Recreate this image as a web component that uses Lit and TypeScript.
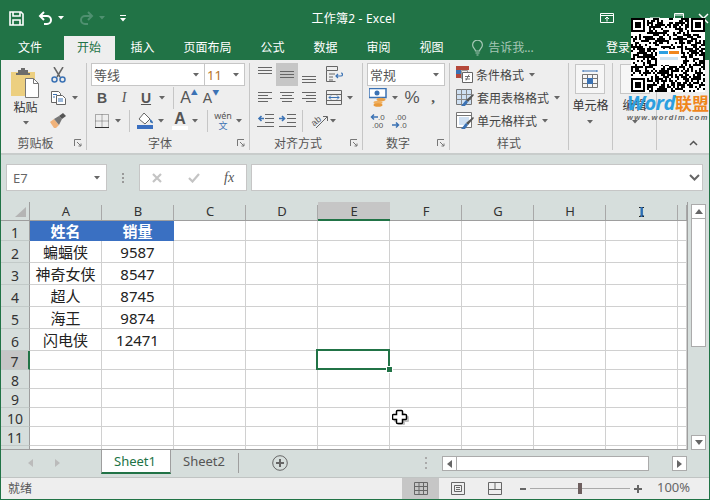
import { LitElement, html, svg, css } from "lit";
import { customElement } from "lit/decorators.js";

const caret = (c = "#666") => html`<svg class="caret" width="6" height="4" viewBox="0 0 6 4"><path d="M0 0h6L3 3.5z" fill="${c}"/></svg>`;

// --- title bar
const icSave = html`<svg width="15" height="15" viewBox="0 0 15 15" fill="none" stroke="#fff" stroke-width="1.6"><path d="M1 1h11l2 2v11H1z"/><path d="M4 1v4h7V1M4 14V9h7v5"/></svg>`;
const icUndo = html`<svg class="undo" width="15" height="14" viewBox="0 0 15 14" fill="none" stroke="#fff" stroke-width="2"><path d="M6 1L2 5l4 4M2 5h7a4 4 0 0 1 0 8H6"/></svg>`;
const icRedo = html`<svg width="15" height="14" viewBox="0 0 15 14" fill="none" stroke="#4f9070" stroke-width="2"><path d="M9 1l4 4-4 4M13 5H6a4 4 0 0 0 0 8h3"/></svg>`;
const icCustom = html`<svg width="6" height="7" viewBox="0 0 6 7"><path d="M0 0h6v1H0zM0 3h6L3 6.5z" fill="#fff"/></svg>`;
const icDisplay = html`<svg width="14" height="10" viewBox="0 0 14 10" fill="none" stroke="#fff"><path d="M.5.5h13v9H.5zM.5 2.5h13M7 8.5V4.500M5 6l2-2 2 2"/></svg>`;
const icMin = html`<svg width="10" height="2"><path d="M0 1h10" stroke="#fff"/></svg>`;
const icMax = html`<svg width="10" height="10" viewBox="0 0 10 10" fill="none" stroke="#fff"><path d="M.5.5h9v9H.5zM.5 2h9"/></svg>`;
const icClose = html`<svg width="11" height="11" viewBox="0 0 11 11" stroke="#fff" stroke-width="1.5"><path d="M1 1l9 9M10 1l-9 9"/></svg>`;
const icBulb = html`<svg width="11" height="16" viewBox="0 0 11 16" fill="none" stroke="#a5c7b5" stroke-width="1.200"><path d="M3.500 11c0-2-2.900-3-2.900-6a4.900 4.900 0 0 1 9.800 0c0 3-2.900 4-2.900 6zM3.500 13h4M4.500 15h2"/></svg>`;

// --- clipboard
const icPaste = html`<svg width="29" height="31" viewBox="0 0 29 31"><path d="M0 5h24v24H0z" fill="#eccf80"/><path d="M7 3h3V1h4v2h3v3h2v2H5V6h2z" fill="#6c6c6c"/><path d="M14.500 11.500h8l5 5v14h-13z" fill="#fff" stroke="#777"/><path d="M22.500 11.500v5h5" fill="none" stroke="#777"/></svg>`;
const icCut = html`<svg width="15" height="16" viewBox="0 0 15 16" fill="none"><path d="M3 0l6 10M12 0L6 10" stroke="#666" stroke-width="1.500"/><circle cx="3.500" cy="12.500" r="2.500" stroke="#3b72b4" stroke-width="1.500"/><circle cx="11.500" cy="12.500" r="2.500" stroke="#3b72b4" stroke-width="1.500"/></svg>`;
const icCopy = html`<svg width="15" height="14" viewBox="0 0 15 14" fill="none" stroke="#666"><path d="M.5.500h7l2 2v9h-9z" fill="#fff"/><path d="M5.500 4.500h6l3 3v6h-9z" fill="#fff"/><path d="M2 3.500h4M2 6h2" stroke="#3b72b4"/><path d="M7 8h5M7 10h5" stroke="#3b72b4"/></svg>`;
const icPainter = html`<svg width="16" height="15" viewBox="0 0 16 15"><path d="M0 9l4-3 5 6-3 3H4z" fill="#f0b27a"/><path d="M4 6l5-3 3 3-3 6z" fill="#777"/><path d="M9 3l4-3 3 3-4 3z" fill="#555"/></svg>`;

// --- font
const icBorders = html`<svg width="14" height="14" viewBox="0 0 14 14" fill="none" stroke="#666" stroke-dasharray="1 1"><path d="M.5.500h13v13H.5zM7 .5v13M.5 7h13"/><path d="M0 13.500h14" stroke-dasharray="none" stroke="#333"/></svg>`;
const icFill = html`<svg width="17" height="17" viewBox="0 0 17 17"><path d="M2 7l5-6 6 6-5 5z" fill="#fff" stroke="#666"/><path d="M13 7c2 1 3 3 3 4-1 .5-2 0-3-1z" fill="#3b72b4"/><path d="M0 13h16v4H0z" fill="#3a6fc0"/></svg>`;

// --- alignment
const lines = (ys: number[], x1s: number[], x2s: number[]) =>
  html`<svg width="16" height="21" viewBox="0 0 16 21" stroke="#666">${ys.map((y, i) => svg`<path d="M${x1s[i]} ${y}.5H${x2s[i]}"/>`)}</svg>`;
const full3 = (a: number) => lines([a, a + 3, a + 6], [1, 1, 1], [15, 15, 15]);
const icLeft = lines([5, 8, 11, 14], [1, 1, 1, 1], [15, 11, 15, 11]);
const icCenter = lines([5, 8, 11, 14], [1, 3, 1, 3], [15, 13, 15, 13]);
const icRight = lines([5, 8, 11, 14], [1, 5, 1, 5], [15, 15, 15, 15]);
const icWrap = html`<svg width="17" height="17" viewBox="0 0 17 17" fill="none" stroke="#666"><path d="M.5.500h11v4H.5zM.5 4.500v11h9M3 8h6M3 11h4M3 14h4"/><path d="M10 10h5a1.500 1.500 0 0 0 0-3M12 8l-2 2 2 2" stroke="#3b72b4" stroke-width="1.200"/></svg>`;
const icMerge = html`<svg width="16" height="15" viewBox="0 0 16 15" fill="none" stroke="#666"><path d="M.5.500h15v14H.5zM.5 4.500h15M.5 10.500h15"/><path d="M3 7.500h10M5 5.500l-2 2 2 2M11 5.500l2 2-2 2" stroke="#3b72b4"/></svg>`;
const icOutdent = html`<svg width="17" height="13" viewBox="0 0 17 13" fill="none"><path d="M8 .5h9M8 4.500h9M8 8.500h9M0 12.500h17" stroke="#666"/><path d="M7 4.500H2M4.500 2L2 4.500 4.500 7" stroke="#3b72b4" stroke-width="1.600"/></svg>`;
const icIndent = html`<svg width="17" height="13" viewBox="0 0 17 13" fill="none"><path d="M8 .5h9M8 4.500h9M8 8.500h9M0 12.500h17" stroke="#666"/><path d="M0 4.500h5M3 2l2.500 2.500L3 7" stroke="#3b72b4" stroke-width="1.600"/></svg>`;
const icOrient = html`<svg width="18" height="16" viewBox="0 0 18 16" fill="none" overflow="visible"><text x="1" y="11" font-size="9" font-family="Liberation Sans, sans-serif" fill="#555" transform="rotate(-40 6 8)">ab</text><path d="M6 15L17 4M13 3.500h4.500V8" stroke="#666"/></svg>`;

// --- number
const icAccount = html`<svg width="18" height="19" viewBox="0 0 18 19" fill="none"><path d="M0 .5h17v9H0z" fill="#fff" stroke="#3b72b4" stroke-width="1.500"/><circle cx="8" cy="5" r="2.500" fill="#3b72b4"/><ellipse cx="12" cy="11.500" rx="4.500" ry="1.800" fill="#eaa24a"/><ellipse cx="9" cy="14.500" rx="4.500" ry="1.800" fill="#f0b060"/><ellipse cx="9" cy="17" rx="4.500" ry="1.800" fill="#e89a3c"/></svg>`;
const icDecUp = html`<svg width="16" height="16" viewBox="0 0 16 16"><path d="M8 4H2M4 1.500L1.500 4 4 6.500" fill="none" stroke="#3b72b4" stroke-width="1.500"/><text x="8" y="7" font-size="8" font-family="Liberation Sans, sans-serif" fill="#555">.0</text><text x="2" y="15" font-size="8" font-family="Liberation Sans, sans-serif" fill="#555">.00</text></svg>`;
const icDecDown = html`<svg width="16" height="16" viewBox="0 0 16 16"><text x="3" y="7" font-size="8" font-family="Liberation Sans, sans-serif" fill="#555">.00</text><path d="M0 12h6M4 9.500L6.500 12 4 14.500" fill="none" stroke="#3b72b4" stroke-width="1.500"/><text x="8" y="15" font-size="8" font-family="Liberation Sans, sans-serif" fill="#555">.0</text></svg>`;

// --- styles
const icCond = html`<svg width="17" height="17" viewBox="0 0 17 17"><path d="M0 0h13v4H0z" fill="#b5483a"/><path d="M0 4h5v4H0z" fill="#3b72b4"/><path d="M0 8h5v4H0z" fill="#b5483a"/><path d="M5.500 4.500h6v8h-6z" fill="none" stroke="#999"/><path d="M6.500 6.500h10v10h-10z" fill="#fff" stroke="#666"/><path d="M9 10.500h5M9 13h5M10 14.500l3-6" stroke="#555" stroke-width=".8"/></svg>`;
const icTable = html`<svg width="18" height="18" viewBox="0 0 18 18" fill="none"><path d="M.5.500h15v15H.5z" fill="#cfe0f2" stroke="#777"/><path d="M5.500.5v15M10.500.5v15M.5 5.500h15M.5 10.500h15" stroke="#888"/><path d="M17 5l1 1-6 7-2-2z" fill="#555"/><path d="M10 11l2 2-3 4H5z" fill="#3b72b4"/></svg>`;
const icCellStyle = html`<svg width="18" height="18" viewBox="0 0 18 18" fill="none"><path d="M.5.500h15v15H.5z" fill="#fff" stroke="#777"/><path d="M3 5h10v8H3z" fill="#cfe0f2"/><path d="M.5 3.500h15" stroke="#777"/><path d="M17 5l1 1-6 7-2-2z" fill="#555"/><path d="M10 11l2 2-3 4H5z" fill="#3b72b4"/></svg>`;
const icCells = html`<svg width="16" height="20" viewBox="0 0 16 20" fill="none" stroke="#777"><path d="M1 2h14M1 1v2M15 1v2" stroke="#3b72b4"/><path d="M.5 5.500h15v13H.5zM.5 9.500h15M.5 14.500h15M5.500 5.500v13M10.500 5.500v13"/><path d="M5 9h6v6H5z" fill="#3b72b4" stroke="none"/></svg>`;
const icLauncher = html`<svg class="launcher" width="8" height="8" viewBox="0 0 8 8" fill="none" stroke="#777"><path d="M.5 7V.5H7M3 3l4 4M7 4.500V7H4.500"/></svg>`;

// --- status bar
const icNormal = html`<svg width="14" height="13" viewBox="0 0 14 13" fill="none" stroke="#666"><path d="M.5.500h13v12H.5zM5 .5v12M9.500.5v12M.5 4.500h13M.5 8.500h13"/></svg>`;
const icPage = html`<svg width="14" height="13" viewBox="0 0 14 13" fill="none" stroke="#666"><path d="M.5.500h13v12H.5zM3.500 3.500h7v6h-7zM5 5.500h4M5 7.500h4"/></svg>`;
const icBreak = html`<svg width="14" height="13" viewBox="0 0 14 13" fill="none" stroke="#666"><path d="M.5.500h13v12H.5zM.5 7.500h13M7 .5v7"/></svg>`;

// QR modules are filler noise with the three finder squares on top
function qrCells() {
  const n = 37;
  const out: { x: number; y: number }[] = [];
  let seed = 20170;
  const rnd = () => ((seed = (seed * 1103515245 + 12345) & 0x7fffffff) >> 16) % 100;
  const inFinder = (x: number, y: number) =>
    (x < 8 && y < 8) || (x > n - 9 && y < 8) || (x < 8 && y > n - 9);
  for (let y = 0; y < n; y++)
    for (let x = 0; x < n; x++) if (!inFinder(x, y) && rnd() < 52) out.push({ x, y });
  return out;
}
const finder = (x: number, y: number) => svg`
  <path d="M${x} ${y}h14v14h-14z" fill="#000"/>
  <path d="M${x + 2} ${y + 2}h10v10h-10z" fill="#fff"/>
  <path d="M${x + 4} ${y + 4}h6v6h-6z" fill="#000"/>`;
const qr = html`<svg class="qr" width="74" height="74" viewBox="0 0 74 74">
  <path d="M0 0h74v74H0z" fill="#fff"/>
  ${qrCells().map((c) => svg`<rect x="${c.x * 2}" y="${c.y * 2}" width="2" height="2" fill="#000"/>`)}
  ${finder(0, 0)}${finder(60, 0)}${finder(0, 60)}
  <path d="M26 31h24v16H26z" fill="#fff"/>
  <path d="M28 33h9v3h-9z" fill="#2b9fe0"/><path d="M38 33h10v3H38z" fill="#f0861d"/>
  <path d="M29 39h18v3H29z" fill="#cfe4f2"/>
</svg>`;

const COLS = ["A", "B", "C", "D", "E", "F", "G", "H", "I", ""];
const DATA: Record<number, [string, string]> = {
  1: ["姓名", "销量"],
  2: ["蝙蝠侠", "9587"],
  3: ["神奇女侠", "8547"],
  4: ["超人", "8745"],
  5: ["海王", "9874"],
  6: ["闪电侠", "12471"],
};

@customElement("app-root")
export class AppRoot extends LitElement {
  static styles = css`
    :host {
      display: block;
      width: 710px;
      height: 500px;
      font-family: "Noto Sans", "Noto Sans CJK SC", sans-serif;
    }
    .win {
      position: relative;
      box-sizing: border-box;
      width: 710px;
      height: 500px;
      overflow: hidden;
      background: #d6dedc;
      border: solid #217346;
      border-width: 0 1px 1px;
      color: #444;
      font-size: 12px;
    }
    svg { display: block; flex: none; }

    .title {
      display: flex;
      align-items: center;
      height: 36px;
      background: #217346;
      color: #fff;
    }
    .qat { display: flex; align-items: center; width: 130px; padding-left: 8px; box-sizing: border-box; }
    .qat .undo { margin-left: 14px; }
    .qat .caret { margin: 0 15px 0 5px; }
    .doc { flex: 1; text-align: center; padding-right: 3px; letter-spacing: .2px; }
    .ctl { display: flex; align-items: center; box-sizing: border-box; width: 130px; padding-left: 21px; gap: 14px; }
    .ctl .sp { width: 8px; }

    .tabs {
      display: flex;
      align-items: stretch;
      height: 24px;
      padding-left: 2.500px;
      background: #217346;
      color: #fff;
      line-height: 24px;
    }
    .tab { padding: 0 14.500px; }
    .tab.file { margin-right: 7.500px; }
    .tab.on { padding: 0 14px 0 13px; margin-right: 1px; background: #eee; color: #217346; }
    .tell { display: flex; align-items: center; gap: 5px; margin-left: 14px; color: #a5c7b5; }
    .login { margin-left: auto; margin-right: 79px; }

    .ribbon {
      display: flex;
      height: 95px;
      box-sizing: border-box;
      padding-top: 3px;
      background: #eee;
      border-bottom: 2px solid #c8cccb;
    }
    .grp {
      display: flex;
      flex-direction: column;
      flex: none;
      box-sizing: border-box;
      height: 87px;
      border-right: 1px solid #c6c6c6;
    }
    .body { flex: 1; display: flex; }
    .lab {
      display: flex;
      align-items: center;
      height: 15px;
      color: #555;
    }
    .lab span { flex: 1; text-align: center; }
    .launcher { margin: 0 4px; }
    .g1 { width: 86px; } .g2 { width: 163px; } .g3 { width: 113px; } .g4 { width: 87px; }
    .g5 { width: 119px; } .g6 { width: 44px; } .g7 { width: 44px; }
    .g2 .body, .g3 .body, .g4 .body { padding-left: 4px; }
    .g5 .body { padding-left: 6px; }
    .rows { display: grid; grid-auto-rows: 23px; }
    .row { display: flex; align-items: center; }
    .i { display: flex; align-items: center; justify-content: center; height: 23px; flex: none; }
    .w8 { width: 8px; } .w10 { width: 10px; } .w14 { width: 14px; } .w18 { width: 18px; }
    .w20 { width: 20px; } .w22 { width: 22px; } .w24 { width: 24px; } .w30 { width: 30px; }
    .ml1 { margin-left: 1px; } .ml3 { margin-left: 3px; } .ml4 { margin-left: 4px; }
    .ml6 { margin-left: 6px; } .ml7 { margin-left: 7px; }
    .vsep { width: 1px; height: 22px; background: #c6c6c6; flex: none; }
    .hot { background: #c6c6c6; }

    .paste {
      display: flex;
      flex-direction: column;
      align-items: center;
      width: 48px;
      padding: 4px 0 0 1px;
      box-sizing: border-box;
      color: #333;
    }
    .paste span { margin: 1px 0 5px; line-height: 17px; font-size: 12px; }
    .combo {
      display: flex;
      align-items: center;
      box-sizing: border-box;
      height: 23px;
      padding: 0 5px 0 2px;
      background: #fff;
      border: 1px solid #c6c6c6;
      font-size: 13px;
      color: #555;
    }
    .combo span { flex: 1; }
    .c-font { width: 114px; } .c-size { width: 40px; border-left: 0; margin-left: 0; } .c-num { width: 78px; }
    .c-size span { color: #b5731f; }
    .b { font: bold 14px "Liberation Sans", sans-serif; color: #555; }
    .it { font: italic 14px "Liberation Serif", serif; color: #555; }
    .u { font: bold 14px "Liberation Sans", sans-serif; color: #555; text-decoration: underline; }
    .abig { font: 16px "Liberation Sans", sans-serif; color: #555; }
    .asm { font: 14px "Liberation Sans", sans-serif; color: #555; }
    .tri { font-size: 7px; color: #3b72b4; align-self: flex-start; margin-top: 3px; line-height: 8px; }
    .acol { display: flex; flex-direction: column; align-items: center; font: bold 16px/15px "Liberation Sans", sans-serif; color: #555; }
    .acol i { display: block; width: 16px; height: 4px; background: #fff; }
    .wen { display: flex; flex-direction: column; align-items: center; line-height: 10px; font-size: 9px; color: #555; }
    .wen b { font-weight: 400; color: #3b72b4; font-size: 9px; line-height: 10px; }
    .pct { font: 17px "Liberation Sans", sans-serif; color: #555; }
    .cm { font: bold 15px "Liberation Serif", serif; color: #555; }
    .sty { display: flex; align-items: center; gap: 3px; font-size: 12px; color: #444; }
    .sty .caret { margin-left: 2px; }
    .big {
      display: flex;
      flex-direction: column;
      align-items: center;
      color: #333;
    }
    .big .box {
      display: flex;
      align-items: center;
      justify-content: center;
      box-sizing: border-box;
      width: 30px;
      height: 30px;
      margin: 1px 0 3px;
      background: #f6f6f6;
      border: 1px solid #c6c6c6;
    }
    .big span { line-height: 17px; margin-bottom: 6px; }
    .g6 .body, .g7 .body { justify-content: center; }
    .fold { flex: 1; display: flex; justify-content: flex-end; align-items: flex-end; padding: 0 11px 4px 0; height: 87px; box-sizing: border-box; }

    .fbar {
      display: flex;
      align-items: stretch;
      gap: 4px;
      height: 27px;
      margin: 9px 0 11px;
      padding: 0 6px 0 5px;
    }
    .fbox {
      display: flex;
      align-items: center;
      box-sizing: border-box;
      background: #fff;
      border: 1px solid #c6c6c6;
    }
    .name { width: 101px; padding: 0 6px; justify-content: space-between; font-size: 13px; color: #666; }
    .dots { width: 24px; display: flex; flex-direction: column; align-items: center; justify-content: center; gap: 2px; }
    .dots i { width: 2px; height: 2px; background: #999; }
    .fx { width: 108px; padding-left: 12px; }
    .fx .ok { margin-left: 26px; }
    .fx em { margin-left: 24px; font: italic 14px "Liberation Serif", serif; color: #555; }
    .input { flex: 1; justify-content: flex-end; padding-right: 2px; }

    .sheet { display: flex; }
    .grid {
      display: grid;
      grid-template-columns: 29px repeat(9, 72px) 9px;
      grid-template-rows: 19px 20px repeat(5, 22px) repeat(6, 19px);
      box-sizing: border-box;
      width: 687px;
      height: 248px;
      overflow: hidden;
      border-right: 1px solid #9e9e9e;
      border-bottom: 1px solid #9e9e9e;
    }
    .corner { display: flex; align-items: flex-end; justify-content: flex-end; padding: 0 3px 3px 0; border-bottom: 1px solid #9e9e9e; border-right: 1px solid #9e9e9e; box-sizing: border-box; }
    .ch {
      display: flex;
      align-items: flex-end;
      justify-content: center;
      box-sizing: border-box;
      border-bottom: 1px solid #9e9e9e;
      background: linear-gradient(#a8a8a8, #a8a8a8) right 3px / 1px 100% no-repeat;
      font-size: 13px;
      line-height: 17px;
      color: #333;
    }
    .ch.sel { background: #c6c6c6; border-bottom: 2px solid #217346; line-height: 16px; }
    .rh {
      display: flex;
      align-items: center;
      justify-content: center;
      box-sizing: border-box;
      padding-top: 3px;
      border-bottom: 1px solid #c2cac8;
      border-right: 1px solid #9e9e9e;
      font-size: 14px;
      color: #333;
    }
    .rh.sel { background: #c6c6c6; border-right: 2px solid #217346; }
    .c {
      position: relative;
      display: flex;
      align-items: center;
      justify-content: center;
      box-sizing: border-box;
      background: #fff;
      border-right: 1px solid #d0d0d0;
      border-bottom: 1px solid #d0d0d0;
      font-size: 15px;
      color: #222;
    }
    .c.head { background: #3a70c2; border-color: #3a70c2; color: #fff; font-weight: 700; }
    .c.sel::after {
      content: "";
      position: absolute;
      top: -2px;
      left: -2px;
      right: -1px;
      bottom: -1px;
      border: 2px solid #217346;
    }
    .c.sel::before {
      content: "";
      position: absolute;
      z-index: 1;
      right: -3px;
      bottom: -3px;
      width: 5px;
      height: 5px;
      background: #217346;
      outline: 1px solid #fff;
    }

    .vscroll {
      display: flex;
      flex-direction: column;
      align-items: flex-start;
      padding: 2px 0 0 3px;
    }
    .sbtn {
      display: flex;
      align-items: center;
      justify-content: center;
      flex: none;
      box-sizing: border-box;
      width: 15px;
      height: 15px;
      background: #fff;
      border: 1px solid #ababab;
    }
    .vthumb { box-sizing: border-box; width: 15px; height: 128px; background: #fff; border: 1px solid #ababab; border-top: 0; }
    .vscroll .sbtn.down { margin-top: 88px; }

    .tabbar { display: flex; align-items: flex-start; height: 27px; }
    .nav { display: flex; align-items: center; gap: 22px; width: 100px; height: 26px; padding-left: 27px; box-sizing: border-box; }
    .st {
      box-sizing: border-box;
      height: 24px;
      line-height: 22px;
      font-size: 13px;
    }
    .st.on { width: 70px; padding-right: 2px; text-align: center; background: #fff; color: #217346; border: solid #9e9e9e; border-width: 0 1px; border-bottom: 2px solid #217346; }
    .st.off { width: 67px; padding-left: 12px; color: #555; }
    .tsep { width: 1px; height: 20px; margin-top: 3px; background: #9e9e9e; }
    .plus { margin: 5px 0 0 33px; }
    .tdots { margin-left: auto; height: 26px; width: 8px; display: flex; flex-direction: column; align-items: center; justify-content: center; gap: 3px; }
    .tdots i { width: 2px; height: 2px; background: #aaa; }
    .hscroll { display: flex; align-items: flex-start; margin: 6px 22px 0 12px; }
    .hthumb { box-sizing: border-box; width: 192px; height: 15px; background: #fff; border: 1px solid #ababab; border-left: 0; }
    .hscroll .sbtn.r { margin-left: 23px; }

    .status {
      display: flex;
      align-items: stretch;
      box-sizing: border-box;
      height: 22px;
      background: #eee;
      border-top: 1px solid #c0c4c3;
      color: #555;
    }
    .ready { padding-left: 7px; line-height: 21px; flex: 1; }
    .view { display: flex; align-items: center; justify-content: center; width: 37px; }
    .view.on { background: #c6c6c6; }
    .zoom { display: flex; align-items: center; margin-left: 7px; }
    .zoom .m { width: 6px; height: 2px; background: #666; }
    .track { position: relative; width: 100px; height: 1px; margin: 0 4px; background: #aaa; }
    .track i { position: absolute; left: 48px; top: -5px; width: 4px; height: 11px; background: #6e5f5f; }
    .pcnt { width: 67px; padding-left: 15px; box-sizing: border-box; font-size: 13px; color: #666; }

    .qr { position: absolute; left: 630px; top: 18px; }
    .mark { position: absolute; left: 626px; top: 92px; width: 84px; white-space: nowrap; }
    .mark .w { font: italic 700 20px/22px "Open Sans", sans-serif; color: #2b9fe0; letter-spacing: -.5px; }
    .mark .l { font: 700 17px/22px "Noto Sans CJK SC", sans-serif; color: #f0861d; }
    .mark .u2 { font: italic 700 7.500px/8px "Liberation Sans", sans-serif; letter-spacing: 1.300px; color: #666; }
    .cross { position: absolute; left: 391px; top: 409px; }
    .ibeam { position: absolute; left: 637px; top: 207px; }
  `;

  private renderRibbon() {
    return html`<div class="ribbon">
      <div class="grp g1">
        <div class="body">
          <div class="paste">${icPaste}<span>粘贴</span>${caret()}</div>
          <div class="rows">
            <div class="row"><div class="i w18">${icCut}</div></div>
            <div class="row"><div class="i w18">${icCopy}</div><div class="i w10 ml3">${caret()}</div></div>
            <div class="row"><div class="i w18">${icPainter}</div></div>
          </div>
        </div>
        <div class="lab"><span>剪贴板</span>${icLauncher}</div>
      </div>

      <div class="grp g2">
        <div class="body">
          <div class="rows">
            <div class="row">
              <div class="combo c-font"><span>等线</span>${caret()}</div>
              <div class="combo c-size"><span>11</span>${caret()}</div>
            </div>
            <div class="row">
              <div class="i w22 b">B</div><div class="i w22 it">I</div><div class="i w22 u">U</div>
              <div class="i w10">${caret()}</div>
              <div class="vsep ml6"></div>
              <div class="i w30"><span class="abig">A</span><span class="tri">▲</span></div>
              <div class="i w14"><span class="asm">A</span><span class="tri">▼</span></div>
            </div>
            <div class="row">
              <div class="i w22">${icBorders}</div><div class="i w10">${caret()}</div>
              <div class="vsep ml6"></div>
              <div class="i w22 ml4">${icFill}</div><div class="i w10">${caret()}</div>
              <div class="i w20 ml4"><div class="acol">A<i></i></div></div><div class="i w10">${caret()}</div>
              <div class="vsep ml7"></div>
              <div class="i w22 ml4"><div class="wen">wén<b>文</b></div></div><div class="i w10">${caret()}</div>
            </div>
          </div>
        </div>
        <div class="lab"><span>字体</span>${icLauncher}</div>
      </div>

      <div class="grp g3">
        <div class="body">
          <div class="rows">
            <div class="row">
              <div class="i w22">${full3(3)}</div><div class="i w22 hot">${full3(7)}</div><div class="i w22">${full3(12)}</div>
              <div class="i w22 ml3">${icWrap}</div>
            </div>
            <div class="row">
              <div class="i w22">${icLeft}</div><div class="i w22">${icCenter}</div><div class="i w22">${icRight}</div>
              <div class="i w22 ml3">${icMerge}</div><div class="i w10">${caret()}</div>
            </div>
            <div class="row">
              <div class="i w22">${icOutdent}</div><div class="i w22">${icIndent}</div>
              <div class="vsep ml4"></div>
              <div class="i w20 ml6">${icOrient}</div><div class="i w8">${caret()}</div>
            </div>
          </div>
        </div>
        <div class="lab"><span>对齐方式</span>${icLauncher}</div>
      </div>

      <div class="grp g4">
        <div class="body">
          <div class="rows">
            <div class="row"><div class="combo c-num"><span>常规</span>${caret()}</div></div>
            <div class="row">
              <div class="i w22">${icAccount}</div><div class="i w10 ml1">${caret()}</div>
              <div class="i w24 pct">%</div><div class="i w18 cm">,</div>
            </div>
            <div class="row"><div class="i w22">${icDecUp}</div><div class="i w22">${icDecDown}</div></div>
          </div>
        </div>
        <div class="lab"><span>数字</span>${icLauncher}</div>
      </div>

      <div class="grp g5">
        <div class="body">
          <div class="rows">
            <div class="sty">${icCond}<span>条件格式</span>${caret()}</div>
            <div class="sty">${icTable}<span>套用表格格式</span>${caret()}</div>
            <div class="sty">${icCellStyle}<span>单元格样式</span>${caret()}</div>
          </div>
        </div>
        <div class="lab"><span>样式</span></div>
      </div>

      <div class="grp g6">
        <div class="body"><div class="big"><div class="box">${icCells}</div><span>单元格</span>${caret()}</div></div>
      </div>
      <div class="grp g7">
        <div class="body"><div class="big"><div class="box"></div><span>编辑</span>${caret()}</div></div>
      </div>
      <div class="fold">
        <svg width="9" height="6" viewBox="0 0 9 6" fill="none" stroke="#555" stroke-width="1.500"><path d="M1 5l3.500-3.500L8 5"/></svg>
      </div>
    </div>`;
  }

  private renderGrid() {
    const rows = Array.from({ length: 12 }, (_, i) => i + 1);
    return html`<div class="grid">
      <div class="corner"><svg width="11" height="10" viewBox="0 0 11 10"><path d="M11 0v10H0z" fill="#b4b4b4"/></svg></div>
      ${COLS.map((c) => html`<div class="ch ${c === "E" ? "sel" : ""}">${c}</div>`)}
      ${rows.map((r) => html`
        <div class="rh ${r === 7 ? "sel" : ""}">${r < 12 ? r : ""}</div>
        ${COLS.map((c, ci) => {
          const text = DATA[r] && ci < 2 ? DATA[r][ci] : "";
          const cls = [r === 1 && ci < 2 ? "head" : "", r === 7 && c === "E" ? "sel" : ""].join(" ");
          return html`<div class="c ${cls}">${text}</div>`;
        })}
      `)}
    </div>`;
  }

  render() {
    return html`<div class="win">
      <div class="title">
        <div class="qat">
          ${icSave}${icUndo}${caret("#fff")}${icRedo}${caret("#4f9070")}${icCustom}
        </div>
        <div class="doc">工作簿2 - Excel</div>
        <div class="ctl">
          ${icDisplay}<div class="sp"></div>${icMin}${icMax}${icClose}
        </div>
      </div>
      <div class="tabs">
        <div class="tab file">文件</div>
        <div class="tab on">开始</div>
        <div class="tab">插入</div>
        <div class="tab">页面布局</div>
        <div class="tab">公式</div>
        <div class="tab">数据</div>
        <div class="tab">审阅</div>
        <div class="tab">视图</div>
        <div class="tell">${icBulb}<span>告诉我...</span></div>
        <div class="login">登录</div>
      </div>
      ${this.renderRibbon()}
      <div class="fbar">
        <div class="fbox name"><span>E7</span>${caret()}</div>
        <div class="dots"><i></i><i></i><i></i></div>
        <div class="fbox fx">
          <svg width="10" height="10" viewBox="0 0 10 10" stroke="#c4c4c4" stroke-width="2.200"><path d="M1 1l8 8M9 1l-8 8"/></svg>
          <svg class="ok" width="12" height="10" viewBox="0 0 12 10" fill="none" stroke="#c4c4c4" stroke-width="2.200"><path d="M1 5l3.500 3.500L11 1"/></svg>
          <em>fx</em>
        </div>
        <div class="fbox input">
          <svg width="11" height="7" viewBox="0 0 11 7" fill="none" stroke="#666" stroke-width="2"><path d="M1 1l4.500 4.500L10 1"/></svg>
        </div>
      </div>
      <div class="sheet">
        ${this.renderGrid()}
        <div class="vscroll">
          <div class="sbtn"><svg width="8" height="5" viewBox="0 0 8 5"><path d="M0 5h8L4 0z" fill="#666"/></svg></div>
          <div class="vthumb"></div>
          <div class="sbtn down"><svg width="8" height="5" viewBox="0 0 8 5"><path d="M0 0h8L4 5z" fill="#666"/></svg></div>
        </div>
      </div>
      <div class="tabbar">
        <div class="nav">
          <svg width="5" height="8" viewBox="0 0 5 8"><path d="M5 0v8L0 4z" fill="#bbb"/></svg>
          <svg width="5" height="8" viewBox="0 0 5 8"><path d="M0 0v8l5-4z" fill="#bbb"/></svg>
        </div>
        <div class="st on">Sheet1</div>
        <div class="st off">Sheet2</div>
        <div class="tsep"></div>
        <svg class="plus" width="16" height="16" viewBox="0 0 16 16" fill="none" stroke="#666"><circle cx="8" cy="8" r="7.300"/><path d="M8 4v8M4 8h8" stroke-width="2"/></svg>
        <div class="tdots"><i></i><i></i><i></i></div>
        <div class="hscroll">
          <div class="sbtn"><svg width="5" height="8" viewBox="0 0 5 8"><path d="M5 0v8L0 4z" fill="#666"/></svg></div>
          <div class="hthumb"></div>
          <div class="sbtn r"><svg width="5" height="8" viewBox="0 0 5 8"><path d="M0 0v8l5-4z" fill="#666"/></svg></div>
        </div>
      </div>
      <div class="status">
        <div class="ready">就绪</div>
        <div class="view on">${icNormal}</div>
        <div class="view">${icPage}</div>
        <div class="view">${icBreak}</div>
        <div class="zoom">
          <div class="m"></div>
          <div class="track"><i></i></div>
          <svg width="8" height="8" viewBox="0 0 8 8"><path d="M3 0h2v3h3v2H5v3H3V5H0V3h3z" fill="#666"/></svg>
        </div>
        <div class="pcnt">100%</div>
      </div>

      ${qr}
      <div class="mark">
        <div><span class="w">Word</span><span class="l">联盟</span></div>
        <div class="u2">www.wordlm.com</div>
      </div>
      <svg class="ibeam" width="8" height="10" viewBox="0 0 8 10" fill="none"><path d="M1 .5h5M1 9.500h5" stroke="#222"/><path d="M3.500 0v10" stroke="#2b6fb8" stroke-width="2"/></svg>
      <svg class="cross" width="18" height="18" viewBox="0 0 18 18">
        <path d="M7 4h5a1 1 0 0 1 1 1v2h3a1 1 0 0 1 1 1v4a1 1 0 0 1-1 1h-3v2a1 1 0 0 1-1 1H7a1 1 0 0 1-1-1v-2H3a1 1 0 0 1-1-1V8a1 1 0 0 1 1-1h3V5a1 1 0 0 1 1-1z" fill="#999" opacity=".6"/>
        <path d="M5.500 1.500h4a1 1 0 0 1 1 1v3h3a1 1 0 0 1 1 1v3a1 1 0 0 1-1 1h-3v3a1 1 0 0 1-1 1h-4a1 1 0 0 1-1-1v-3h-3a1 1 0 0 1-1-1v-3a1 1 0 0 1 1-1h3v-3a1 1 0 0 1 1-1z" fill="#fff" stroke="#000" stroke-width="1.500"/>
      </svg>
    </div>`;
  }
}
